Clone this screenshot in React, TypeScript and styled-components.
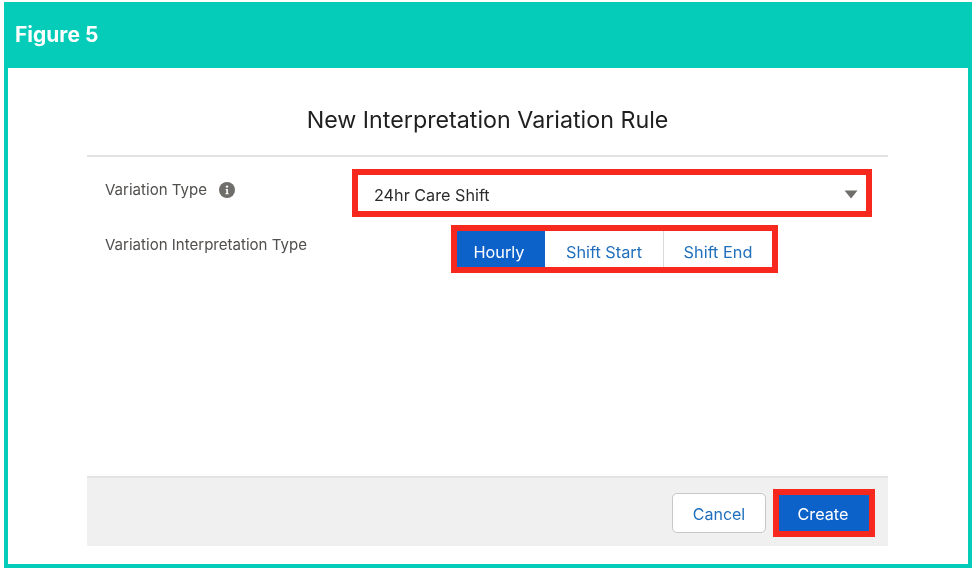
import { FC } from "react";
import styled, { createGlobalStyle } from "styled-components";

const GlobalStyle = createGlobalStyle`
  html, body {
    margin: 0;
    padding: 0;
    background: #ffffff;
    font-family: Inter, "Liberation Sans", sans-serif;
  }
`;

const Page = styled.div`
  width: 976px;
  height: 572px;
  padding: 2px 4px 4px;
  box-sizing: border-box;
  overflow: hidden;
`;

const Frame = styled.div`
  height: 566px;
  border: 4px solid #04ccb8;
  border-top: 0;
  box-sizing: border-box;
  display: flex;
  flex-direction: column;
  filter: blur(0.35px);
`;

const Banner = styled.div`
  height: 66px;
  flex: none;
  margin: 0 -4px;
  padding: 0 11px;
  background: #04ccb8;
  color: #ffffff;
  font-size: 21px;
  font-weight: 700;
  line-height: 65px;
`;

const Modal = styled.div`
  width: 801px;
  height: 478px;
  margin-left: 79px;
  display: flex;
  flex-direction: column;
`;

const ModalHeader = styled.div`
  height: 89px;
  flex: none;
  box-sizing: border-box;
  border-bottom: 2px solid #e3e3e3;
  padding-top: 35px;
  text-align: center;
  color: #1f1f1f;
  font-size: 23.25px;
  line-height: 34px;
`;

const ModalBody = styled.div`
  flex: 1;
  padding: 12px 15px 0 18px;
  display: flex;
  flex-direction: column;
  gap: 8px;
`;

const Row = styled.div`
  display: flex;
  align-items: flex-start;
`;

const Label = styled.div<{ $top: number }>`
  width: 247px;
  flex: none;
  display: flex;
  align-items: center;
  gap: 12px;
  padding-top: ${(p) => p.$top}px;
  color: #514f4d;
  font-size: 15.05px;
  line-height: 20px;
`;

const Highlight = styled.div`
  border: 6px solid #f7281e;
  box-sizing: border-box;
`;

const SelectBox = styled(Highlight)`
  width: 520px;
  height: 48px;
  padding: 3px 8px 0 16px;
  display: flex;
  align-items: center;
  justify-content: space-between;
  color: #2b2b2b;
  font-size: 16.2px;
`;

const SegmentBox = styled(Highlight)`
  width: 327px;
  height: 48px;
  margin-left: 99px;
  display: flex;
`;

const Segment = styled.div<{ $width: number; $active?: boolean; $divider?: boolean }>`
  width: ${(p) => p.$width}px;
  padding: 5px ${(p) => (p.$active ? 4 : 0)}px 0 0;
  display: flex;
  align-items: center;
  justify-content: center;
  box-sizing: border-box;
  background: ${(p) => (p.$active ? "#0d62c9" : "#ffffff")};
  color: ${(p) => (p.$active ? "#ffffff" : "#1f6fbd")};
  border-left: ${(p) => (p.$divider ? "1px solid #dddbda" : "0")};
  font-size: 16.3px;
`;

const ModalFooter = styled.div`
  height: 70px;
  flex: none;
  box-sizing: border-box;
  border-top: 2px solid #e3e3e3;
  background: #f0f0f0;
  padding: 2px 13px 0 0;
  display: flex;
  align-items: center;
  justify-content: flex-end;
  gap: 7px;
`;

const CancelButton = styled.div`
  width: 94px;
  height: 40px;
  padding-top: 2px;
  box-sizing: border-box;
  border: 1px solid #c9c7c5;
  border-radius: 5px;
  background: #ffffff;
  color: #1f6fbd;
  font-size: 16px;
  display: flex;
  align-items: center;
  justify-content: center;
`;

const CreateButton = styled(Highlight)`
  width: 102px;
  height: 48px;
  padding: 2px 2px 0 0;
  background: #0d62c9;
  color: #ffffff;
  font-size: 16.2px;
  display: flex;
  align-items: center;
  justify-content: center;
`;

const InfoIcon: FC = () => (
  <svg width="16" height="16" viewBox="0 0 16 16" aria-hidden="true">
    <circle cx="8" cy="8" r="8" fill="#706e6b" />
    <circle cx="8" cy="4.6" r="1.2" fill="#ffffff" />
    <path d="M6.7 7h2.2v4.2h.8v1H6.4v-1h.9V8h-.6z" fill="#ffffff" />
  </svg>
);

const CaretIcon: FC = () => (
  <svg width="14" height="9" viewBox="0 0 14 9" aria-hidden="true">
    <path d="M0.5 0.5h13L7 8.5z" fill="#706e6b" />
  </svg>
);

const App: FC = () => {
  return (
    <Page>
      <GlobalStyle />
      <Frame>
        <Banner>Figure 5</Banner>
        <Modal>
          <ModalHeader>New Interpretation Variation Rule</ModalHeader>
          <ModalBody>
            <Row>
              <Label $top={11}>
                Variation Type
                <InfoIcon />
              </Label>
              <SelectBox>
                24hr Care Shift
                <CaretIcon />
              </SelectBox>
            </Row>
            <Row>
              <Label $top={10}>Variation Interpretation Type</Label>
              <SegmentBox>
                <Segment $width={88} $active>
                  Hourly
                </Segment>
                <Segment $width={118}>Shift Start</Segment>
                <Segment $width={109} $divider>
                  Shift End
                </Segment>
              </SegmentBox>
            </Row>
          </ModalBody>
          <ModalFooter>
            <CancelButton>Cancel</CancelButton>
            <CreateButton>Create</CreateButton>
          </ModalFooter>
        </Modal>
      </Frame>
    </Page>
  );
};

export default App;
